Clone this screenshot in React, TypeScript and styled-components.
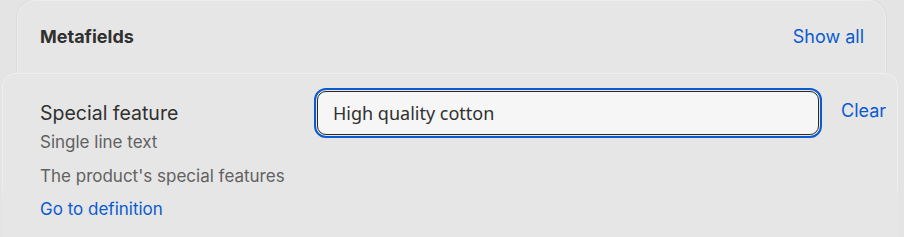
import React from "react";
import styled, { createGlobalStyle } from "styled-components";

const Global = createGlobalStyle`
  html, body { margin: 0; padding: 0; background: #e3e3e3; }
  body { font-family: Inter, "Noto Sans", "Liberation Sans", sans-serif; -webkit-font-smoothing: antialiased; }
  * { box-sizing: border-box; }
`;

const Page = styled.div`
  width: 904px;
  height: 237px;
  overflow: hidden;
  background: #e4e4e4;
  display: flex;
  flex-direction: column;
`;

const BackCard = styled.div`
  margin: 0 18px 0 17px;
  height: 73px;
  flex: none;
  background: #e6e6e6;
  border-radius: 18px 18px 0 0;
  border: 1px solid #ededed;
  border-bottom: none;
  box-shadow: 0 0 0 1px rgba(0, 0, 0, 0.035);
  padding: 0 21px 0 22px;
  display: flex;
  align-items: center;
  justify-content: space-between;
`;

const CardTitle = styled.h2`
  margin: 0;
  font-size: 18px;
  line-height: 24px;
  font-weight: 650;
  color: #303030;
`;

const Link = styled.a<{ $size?: number }>`
  font-size: ${(p) => p.$size ?? 17}px;
  line-height: 24px;
  color: #0b5bd0;
  text-decoration: none;
  cursor: pointer;
`;

const FrontCard = styled.div`
  position: relative;
  margin: 0 6px 0 2px;
  flex: 1;
  background: #e6e6e6;
  border-radius: 13px 13px 0 0;
  padding: 15px 12px 0 38px;
  display: grid;
  grid-template-columns: 255px 508px 1fr;
  column-gap: 19px;
  align-items: start;
  &::before {
    content: "";
    position: absolute;
    inset: 0 0 32px 0;
    border-radius: 13px 13px 0 0;
    border: 1px solid #eeeeee;
    border-bottom: none;
    box-shadow: -1px -1px 0 rgba(0, 0, 0, 0.03), 1px 0 0 rgba(0, 0, 0, 0.03);
    -webkit-mask-image: linear-gradient(to bottom, #000 80%, transparent);
    mask-image: linear-gradient(to bottom, #000 80%, transparent);
    pointer-events: none;
  }
`;

const Info = styled.div`
  display: flex;
  flex-direction: column;
  padding-top: 13px;
`;

const FieldName = styled.div`
  font-size: 19.5px;
  line-height: 24px;
  color: #303030;
`;

const Meta = styled.div<{ $gap: number }>`
  margin-top: ${(p) => p.$gap}px;
  font-size: 17px;
  line-height: 24px;
  color: #616161;
  white-space: nowrap;
`;

const DefLink = styled(Link)`
  margin-top: 9px;
`;

const InputWrap = styled.div`
  padding: 1px;
  border-radius: 12px;
  border: 2px solid #0b5bd0;
`;

const Input = styled.input`
  display: block;
  width: 100%;
  height: 44px;
  border: 1px solid #2a2a2a;
  border-radius: 9px;
  background: #f6f6f6;
  padding: 0 15px;
  font-family: "Noto Sans", Inter, sans-serif;
  font-size: 18px;
  color: #303030;
  outline: none;
`;

const ClearLink = styled(Link)`
  padding-top: 11px;
`;

export default function App() {
  return (
    <>
      <Global />
      <Page>
        <BackCard>
          <CardTitle>Metafields</CardTitle>
          <Link $size={18}>Show all</Link>
        </BackCard>
        <FrontCard>
          <Info>
            <FieldName>Special feature</FieldName>
            <Meta $gap={5}>Single line text</Meta>
            <Meta $gap={10}>The product's special features</Meta>
            <DefLink>Go to definition</DefLink>
          </Info>
          <InputWrap>
            <Input defaultValue="High quality cotton" />
          </InputWrap>
          <ClearLink $size={18}>Clear</ClearLink>
        </FrontCard>
      </Page>
    </>
  );
}
